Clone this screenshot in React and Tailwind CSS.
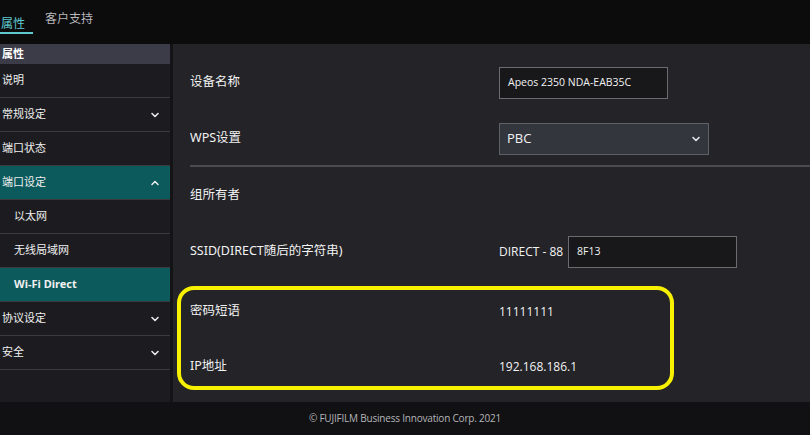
import React from "react";

const Chevron = ({ up }) => (
  <svg width="12" height="12" viewBox="0 0 12 12" className="shrink-0">
    <path d={up ? "M3 7.5 L6 4.5 L9 7.5" : "M3 4.5 L6 7.5 L9 4.5"} fill="none" stroke="#e5e7eb" strokeWidth="1.6" strokeLinecap="round" strokeLinejoin="round" />
  </svg>
);

function SideItem({ label, chevron, active, indent, bold, up }) {
  return (
    <div className={`h-[34px] flex items-center justify-between pr-[9px] border-b border-[#3a3a40] ${active ? "bg-[#0d5a5c]" : ""} ${indent ? "pl-[14px]" : "pl-[2px]"}`}>
      <span className={`text-[11px] text-[#f0f0f0] ${bold ? "font-bold" : ""}`}>{label}</span>
      {chevron && <Chevron up={up} />}
    </div>
  );
}

export default function App() {
  return (
    <div className="w-[810px] h-[435px] flex flex-col bg-[#0c0c0d] overflow-hidden" style={{ fontFamily: '"Noto Sans", "Noto Sans CJK SC", sans-serif' }}>
      <div className="h-[44px] flex items-start gap-[20px] pt-[10px]">
        <div className="relative pb-[8px]">
          <span className="text-[12px] text-[#5fc9d0] pl-[1px]">属性</span>
          <div className="absolute left-0 top-[22px] w-[33px] h-[2px] bg-[#5fc9d0]" />
        </div>
        <span className="text-[12px] text-[#b8b8bc]">客户支持</span>
      </div>
      <div className="flex h-[358px]">
        <div className="w-[173px] bg-[#1c1c20] border-r-[3px] border-[#141417] flex flex-col">
          <div className="h-[20px] bg-[#3b3c48] flex items-center pl-[2px]">
            <span className="text-[11px] font-bold text-white">属性</span>
          </div>
          <SideItem label="说明" />
          <SideItem label="常规设定" chevron />
          <SideItem label="端口状态" />
          <SideItem label="端口设定" chevron up active />
          <SideItem label="以太网" indent />
          <SideItem label="无线局域网" indent />
          <SideItem label="Wi-Fi Direct" indent active bold />
          <SideItem label="协议设定" chevron />
          <SideItem label="安全" chevron />
        </div>
        <div className="flex-1 bg-[#232328] text-[#f2f2f2] flex flex-col">
          <div className="flex items-center h-[37px] mt-[20px]">
            <span className="w-[326px] pl-[17px] text-[12.5px]">设备名称</span>
            <div className="w-[169px] h-[32px] border border-[#6b6c72] bg-[#18181b] flex items-center pl-[8px]">
              <span className="text-[10.5px]" style={{ fontFamily: '"Open Sans", sans-serif' }}>Apeos 2350 NDA-EAB35C</span>
            </div>
          </div>
          <div className="flex items-center h-[37px] mt-[19px]">
            <span className="w-[326px] pl-[17px] text-[12.5px]">WPS设置</span>
            <div className="w-[210px] h-[32px] border border-[#5e6068] bg-[#34363e] flex items-center justify-between pl-[7px] pr-[6px]">
              <span className="text-[13px]" style={{ fontFamily: '"Open Sans", sans-serif' }}>PBC</span>
              <Chevron />
            </div>
          </div>
          <div className="ml-[17px] mt-[8px] h-[2px] bg-[#4a4c52]" />
          <div className="flex items-center h-[56px]">
            <span className="pl-[17px] text-[12.5px]">组所有者</span>
          </div>
          <div className="flex items-center h-[57px]">
            <span className="w-[326px] pl-[17px] text-[12.5px]">SSID(DIRECT随后的字符串)</span>
            <span className="text-[12px] w-[69px]" style={{ fontFamily: '"Open Sans", sans-serif' }}>DIRECT - 88</span>
            <div className="w-[169px] h-[32px] border border-[#6b6c72] bg-[#18181b] flex items-center pl-[8px]">
              <span className="text-[10.5px]" style={{ fontFamily: '"Open Sans", sans-serif' }}>8F13</span>
            </div>
          </div>
          <div className="ml-[4px] mt-[6px] w-[497px] h-[104px] border-[4px] border-[#f7f000] rounded-[17px] flex flex-col">
            <div className="flex items-center h-[40px] mt-[2px]">
              <span className="w-[318px] pl-[9px] text-[12.5px]">密码短语</span>
              <span className="text-[12px]" style={{ fontFamily: '"Open Sans", sans-serif' }}>11111111</span>
            </div>
            <div className="flex items-center h-[40px] mt-[16px]">
              <span className="w-[318px] pl-[9px] text-[12.5px]">IP地址</span>
              <span className="text-[12px]" style={{ fontFamily: '"Open Sans", sans-serif' }}>192.168.186.1</span>
            </div>
          </div>
        </div>
      </div>
      <div className="flex-1 bg-[#111113] flex items-center justify-center">
        <span className="text-[10px] tracking-[-0.2px] text-[#b5b5b8]" style={{ fontFamily: '"Open Sans", sans-serif' }}>© FUJIFILM Business Innovation Corp. 2021</span>
      </div>
    </div>
  );
}
